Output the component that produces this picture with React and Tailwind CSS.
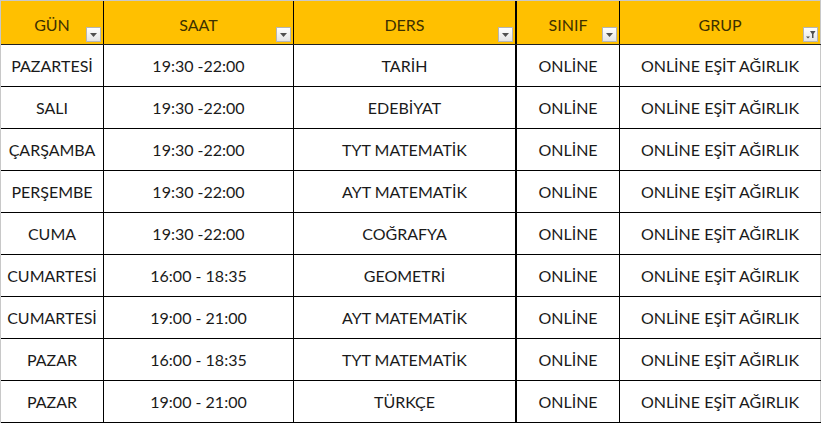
import React from 'react';

const cols = [
  { key: 'gun', label: 'GÜN', w: 'w-[103px]', border: 'border-r' },
  { key: 'saat', label: 'SAAT', w: 'w-[190px]', border: 'border-r' },
  { key: 'ders', label: 'DERS', w: 'w-[223px]', border: 'border-r-2' },
  { key: 'sinif', label: 'SINIF', w: 'w-[103px]', border: 'border-r' },
  { key: 'grup', label: 'GRUP', w: 'w-[201px]', border: 'border-r', filtered: true },
];

const rows = [
  ['PAZARTESİ', '19:30 -22:00', 'TARİH'],
  ['SALI', '19:30 -22:00', 'EDEBİYAT'],
  ['ÇARŞAMBA', '19:30 -22:00', 'TYT MATEMATİK'],
  ['PERŞEMBE', '19:30 -22:00', 'AYT MATEMATİK'],
  ['CUMA', '19:30 -22:00', 'COĞRAFYA'],
  ['CUMARTESİ', '16:00 - 18:35', 'GEOMETRİ'],
  ['CUMARTESİ', '19:00 - 21:00', 'AYT MATEMATİK'],
  ['PAZAR', '16:00 - 18:35', 'TYT MATEMATİK'],
  ['PAZAR', '19:00 - 21:00', 'TÜRKÇE'],
];

// küçük filtre düğmesi (Excel tarzı)
const FilterButton = ({ filtered }) => (
  <div className="absolute right-[2px] bottom-[2px] w-[15px] h-[15px] bg-gradient-to-b from-white to-[#e4e4e4] border border-[#b5b5b5] flex items-center justify-center">
    {filtered ? (
      <svg width="11" height="9" viewBox="0 0 11 9">
        <path d="M1 6.5 L3 8.5 L5 6.5 Z" fill="#505050" />
        <path d="M5 1 H10.5 L8.5 4 V8 H7 V4 Z" fill="#505050" />
      </svg>
    ) : (
      <svg width="7" height="4" viewBox="0 0 7 4">
        <path d="M0 0 H7 L3.5 4 Z" fill="#505050" />
      </svg>
    )}
  </div>
);

export default function App() {
  return (
    <div className="w-[825px] h-[424px] bg-white overflow-hidden" style={{ fontFamily: 'Lato, "Liberation Sans", sans-serif' }}>
      <div className="inline-flex flex-col border-l border-t border-[#c8c8c8]">
        <div className="flex h-[44px] bg-[#ffc000] border-b border-[#222]">
          {cols.map((c) => (
            <div
              key={c.key}
              className={`${c.w} ${c.border} ${c.key === 'grup' ? 'border-[#c8c8c8]' : 'border-black'} relative flex items-center justify-center text-[16px] text-[#3d3000] pt-[4px]`}
            >
              {c.label}
              <FilterButton filtered={c.filtered} />
            </div>
          ))}
        </div>
        {rows.map((r, i) => (
          <div key={i} className="flex h-[42px] border-b border-black">
            {[r[0], r[1], r[2], 'ONLİNE', 'ONLİNE EŞİT AĞIRLIK'].map((t, j) => (
              <div
                key={j}
                className={`${cols[j].w} ${cols[j].border} ${j === 4 ? 'border-[#c8c8c8]' : 'border-black'} flex items-center justify-center text-[16px] text-[#1a1a1a]`}
              >
                {t}
              </div>
            ))}
          </div>
        ))}
      </div>
    </div>
  );
}
